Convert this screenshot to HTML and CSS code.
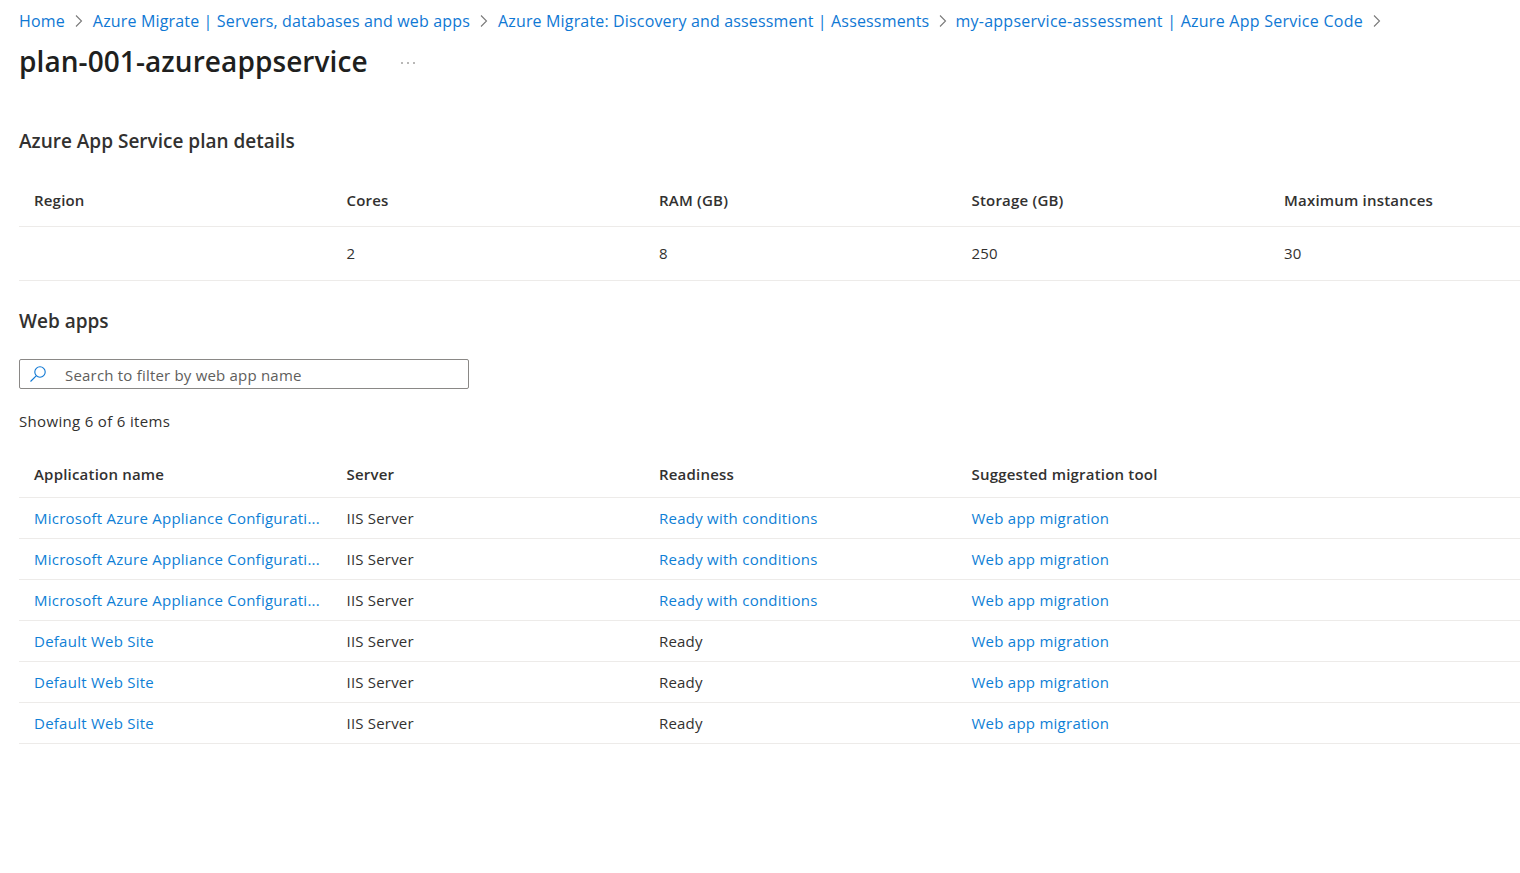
FILE: index.html
```html
<!DOCTYPE html>
<html lang="en">
<head>
<meta charset="utf-8">
<title>plan-001-azureappservice</title>
<link rel="stylesheet" href="styles.css">
</head>
<body>
<nav class="crumbs">
  <a href="#">Home</a><svg class="chev" viewBox="0 0 10 14"><path d="M2 1.5 7.5 7 2 12.5"/></svg>
  <a href="#">Azure Migrate | Servers, databases and web apps</a><svg class="chev" viewBox="0 0 10 14"><path d="M2 1.5 7.5 7 2 12.5"/></svg>
  <a href="#">Azure Migrate: Discovery and assessment | Assessments</a><svg class="chev" viewBox="0 0 10 14"><path d="M2 1.5 7.5 7 2 12.5"/></svg>
  <a class="crumb-last" href="#">my-appservice-assessment | Azure App Service Code</a><svg class="chev" viewBox="0 0 10 14"><path d="M2 1.5 7.5 7 2 12.5"/></svg>
</nav>
<header class="title-row">
  <h1>plan-001-azureappservice</h1>
  <svg class="more" viewBox="0 0 16 4"><circle cx="2" cy="2" r="0.8"/><circle cx="8" cy="2" r="0.8"/><circle cx="14" cy="2" r="0.8"/></svg>
</header>
<h2 class="plan-title">Azure App Service plan details</h2>
<div class="grid plan">
  <div class="row head"><span>Region</span><span>Cores</span><span>RAM (GB)</span><span>Storage (GB)</span><span>Maximum instances</span></div>
  <div class="row plan-row"><span></span><span>2</span><span>8</span><span>250</span><span>30</span></div>
</div>
<h2 class="apps-title">Web apps</h2>
<div class="search">
  <svg class="search-icon" viewBox="0 0 18 18"><circle cx="11" cy="7" r="5.2"/><path d="M7.2 10.8 1.5 16.5"/></svg>
  <span class="search-text">Search to filter by web app name</span>
</div>
<p class="count">Showing 6 of 6 items</p>
<div class="grid apps">
  <div class="row head"><span>Application name</span><span>Server</span><span>Readiness</span><span>Suggested migration tool</span><span></span></div>
  <div class="row app"><a href="#">Microsoft Azure Appliance Configurati...</a><span>IIS Server</span><a href="#">Ready with conditions</a><a href="#">Web app migration</a><span></span></div>
  <div class="row app"><a href="#">Microsoft Azure Appliance Configurati...</a><span>IIS Server</span><a href="#">Ready with conditions</a><a href="#">Web app migration</a><span></span></div>
  <div class="row app"><a href="#">Microsoft Azure Appliance Configurati...</a><span>IIS Server</span><a href="#">Ready with conditions</a><a href="#">Web app migration</a><span></span></div>
  <div class="row app"><a href="#">Default Web Site</a><span>IIS Server</span><span>Ready</span><a href="#">Web app migration</a><span></span></div>
  <div class="row app"><a href="#">Default Web Site</a><span>IIS Server</span><span>Ready</span><a href="#">Web app migration</a><span></span></div>
  <div class="row app"><a href="#">Default Web Site</a><span>IIS Server</span><span>Ready</span><a href="#">Web app migration</a><span></span></div>
</div>
</body>
</html>
```
FILE: styles.css
```css
* { box-sizing: border-box; }
html, body { margin: 0; background: #fff; }
body {
  padding: 0 0 0 19px;
  font-family: "Open Sans", "Noto Sans", sans-serif;
  font-size: 15px;
  letter-spacing: 0.2px;
  color: #323130;
  overflow: hidden;
  height: 873px;
}
a { color: #0f7fd6; text-decoration: none; letter-spacing: 0.25px; }
.crumbs {
  display: flex;
  align-items: center;
  height: 22px;
  margin-top: 10px;
  font-size: 16px;
  letter-spacing: 0.16px;
  white-space: nowrap;
}
.crumbs a { color: #0f78d4; letter-spacing: 0.16px; }
.crumbs .crumb-last { margin-left: -2px; letter-spacing: 0.26px; }
.chev { width: 10px; height: 14px; margin: 0 9px; flex: none; }
.chev path { fill: none; stroke: #7a7a7a; stroke-width: 1.1; }
.title-row { display: flex; align-items: center; height: 44px; margin-top: 7px; }
h1 { margin: 0; font-size: 28px; font-weight: 600; color: #201f1e; letter-spacing: 0.08px; }
.more { width: 16px; height: 4px; margin: 3px 0 0 32px; flex: none; }
.more circle { fill: #605e5c; }
h2 { margin: 0; font-size: 19px; font-weight: 600; line-height: 26px; letter-spacing: 0; color: #323130; }
.plan-title { margin-top: 45px; }
.apps-title { margin-top: 27px; }
.row {
  display: grid;
  grid-template-columns: repeat(4, 312.5px) 1fr;
  align-items: center;
  border-bottom: 1px solid #edebe9;
}
.row > * { padding-left: 15px; white-space: nowrap; overflow: hidden; }
.head { font-weight: 600; letter-spacing: 0.2px; }
.plan { margin-top: 21px; }
.plan .head { height: 52px; padding-bottom: 2px; }
.plan-row { height: 54px; padding-bottom: 2px; }
.apps { margin-top: 20px; }
.apps .head { height: 47px; }
.app { height: 41px; padding-bottom: 1px; }
.search {
  display: flex;
  align-items: center;
  width: 450px;
  height: 30px;
  margin-top: 25px;
  border: 1px solid #8a8886;
  border-radius: 2px;
  color: #605e5c;
}
.search-text { padding-top: 2px; }
.search-icon { width: 18px; height: 18px; margin: 0 18px 0 9px; flex: none; }
.search-icon circle, .search-icon path { fill: none; stroke: #0f78d4; stroke-width: 1.1; }
.count { margin: 22px 0 0; line-height: 20px; letter-spacing: 0.33px; }
```
